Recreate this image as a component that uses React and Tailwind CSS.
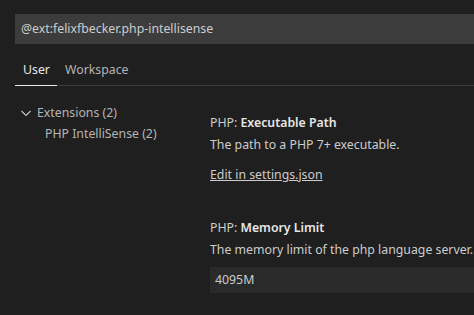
export default function App() {
  return (
    <div className="w-[474px] h-[315px] overflow-hidden bg-[#1f1f1f] text-[12.3px] text-[#cccccc]" style={{ fontFamily: '"Noto Sans", sans-serif' }}>
      <div className="pt-[14px] pl-[15px]">
        <div className="h-[30px] bg-[#3c3c3c] flex items-center pl-[6px] text-[#cccccc]">
          @ext:felixfbecker.php-intellisense
        </div>
      </div>
      <div className="pl-[15px] mt-[13px]">
        <div className="flex border-b border-[#3c3c3c] h-[29px]">
          <div className="w-[42px] pl-[8px] text-[#e7e7e7] border-b border-[#e7e7e7] -mb-px leading-[26px]">User</div>
          <div className="pl-[8px] text-[#b4b4b4] leading-[26px]">Workspace</div>
        </div>
      </div>
      <div className="flex">
        <div className="w-[195px] shrink-0 pt-[17px] pl-[18px]">
          <div className="flex items-center h-[20px]">
            <svg width="16" height="16" viewBox="0 0 16 16" className="mr-[3px] text-[#c5c5c5]">
              <path d="M3.5 6l4.5 4.5L12.5 6" fill="none" stroke="currentColor" strokeWidth="1.1" />
            </svg>
            <span className="text-[#b4b4b4]">Extensions (2)</span>
          </div>
          <div className="h-[22px] flex items-center pl-[27px] text-[#b4b4b4]">PHP IntelliSense (2)</div>
        </div>
        <div className="flex-1 pl-[15px] pt-[28px]">
          <div className="leading-[18px]">
            <span className="text-[#cccccc]">PHP: </span>
            <span className="font-semibold text-[#e7e7e7]">Executable Path</span>
          </div>
          <div className="leading-[18px] mt-[4px] text-[#cccccc]">The path to a PHP 7+ executable.</div>
          <div className="leading-[18px] mt-[12px] text-[#cccccc] underline">Edit in settings.json</div>
          <div className="leading-[18px] mt-[35px]">
            <span className="text-[#cccccc]">PHP: </span>
            <span className="font-semibold text-[#e7e7e7]">Memory Limit</span>
          </div>
          <div className="leading-[18px] mt-[4px] text-[#cccccc] whitespace-nowrap">The memory limit of the php language server.</div>
          <div className="mt-[8px] h-[26px] bg-[#2a2a2a] flex items-center pl-[5px] text-[#cccccc]">4095M</div>
        </div>
      </div>
    </div>
  );
}
